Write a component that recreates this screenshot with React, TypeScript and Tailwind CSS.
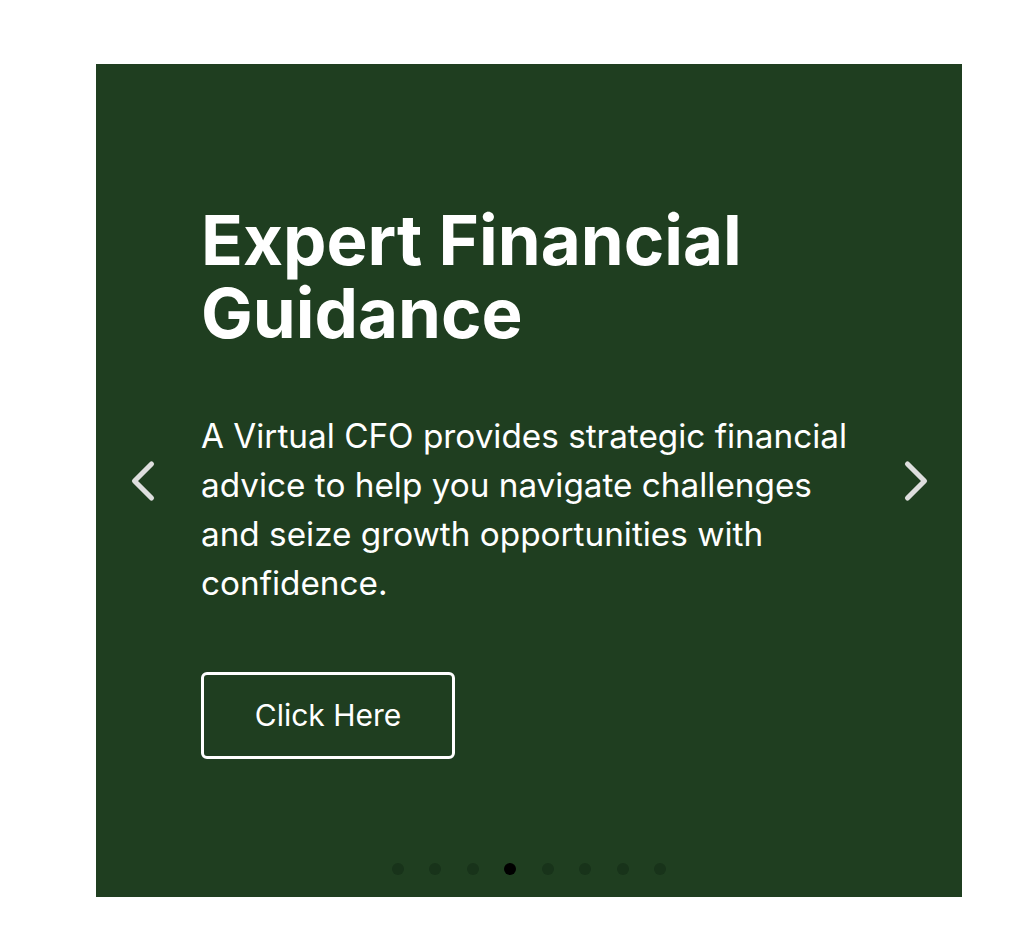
import { ChevronLeft, ChevronRight } from 'lucide-react';

const slides = [0, 1, 2, 3, 4, 5, 6, 7];
const activeSlide = 3;

export default function App() {
  return (
    <div className="min-h-screen bg-white pl-[96px] pt-[64px] font-['Inter','Noto_Sans',sans-serif]">
      <section className="relative flex h-[833px] w-[866px] flex-col bg-[#1f3e20] text-white">
        <button
          aria-label="Previous slide"
          className="absolute left-[13px] top-[383px] text-[#dedede]"
        >
          <ChevronLeft size={68} strokeWidth={1.8} />
        </button>
        <button
          aria-label="Next slide"
          className="absolute right-[12px] top-[383px] text-[#dedede]"
        >
          <ChevronRight size={68} strokeWidth={1.8} />
        </button>

        <div className="flex flex-1 flex-col pl-[105px] pr-[104px] pt-[140px]">
          <h1 className="text-[69px] font-bold leading-[73px]">
            Expert Financial
            <br />
            Guidance
          </h1>
          <p className="mt-[62px] text-[33.3px] leading-[49px]">
            A Virtual CFO provides strategic financial advice to help you navigate challenges and
            seize growth opportunities with confidence.
          </p>
          <div className="mt-[64px]">
            <button className="h-[87px] w-[254px] rounded-[6px] border-[3px] border-white text-[30px]">
              Click Here
            </button>
          </div>
        </div>

        <div className="flex justify-center gap-[25.5px] pb-[22px]">
          {slides.map((i) => (
            <span
              key={i}
              className={
                i === activeSlide
                  ? 'h-[12px] w-[12px] rounded-full bg-black'
                  : 'h-[12px] w-[12px] rounded-full bg-[#18331a]'
              }
            />
          ))}
        </div>
      </section>
    </div>
  );
}
